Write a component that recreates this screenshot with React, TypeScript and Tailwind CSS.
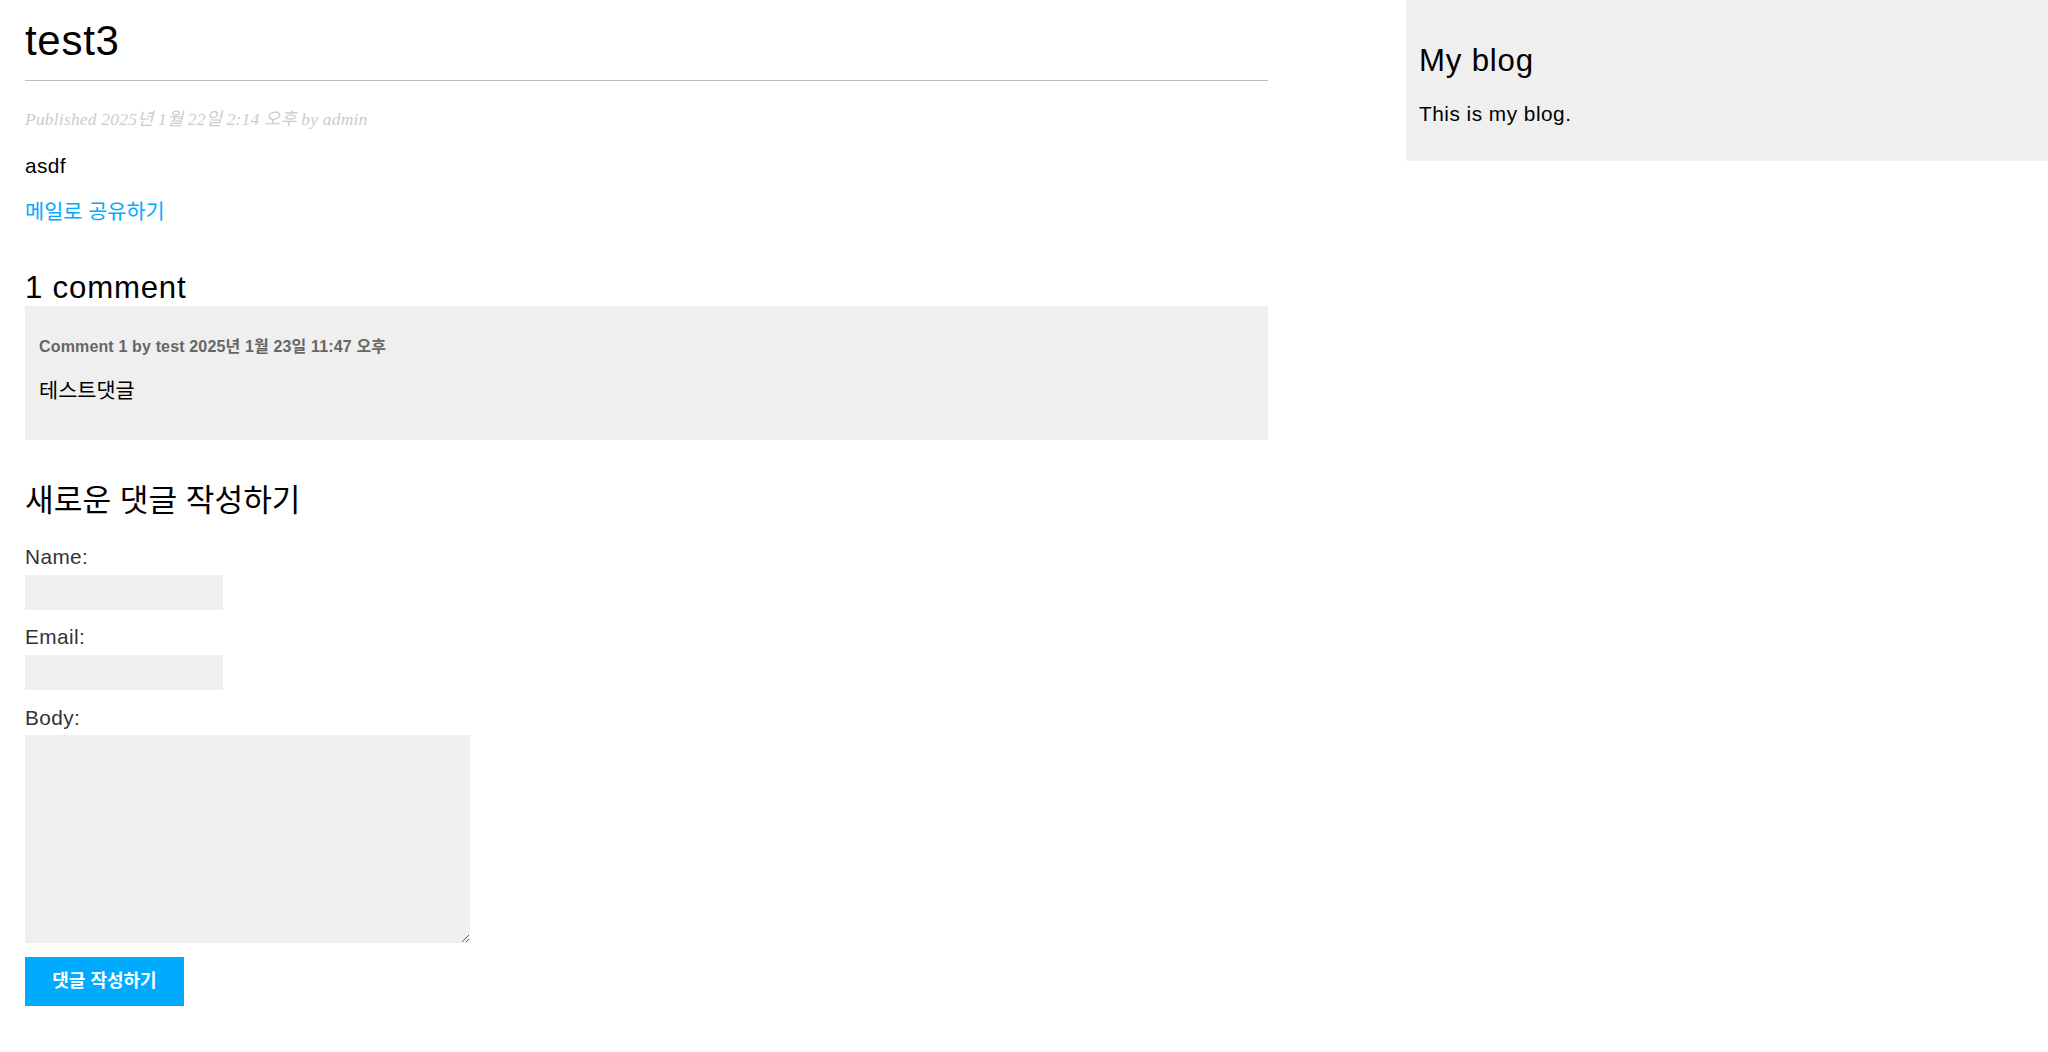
import React from "react";

const SANS = "font-['Liberation_Sans','Noto_Sans_CJK_KR',sans-serif]";

export default function App() {
  return (
    <div className={`${SANS} flex w-[2048px] min-h-[1052px] items-start justify-between bg-white text-black`}>
      {/* Content */}
      <div className="ml-[25px] flex w-[1243px] flex-col">
        <h1 className="mt-[20px] border-b border-[#bdbdbd] pb-[18px] text-[42px] leading-[42px] font-normal tracking-[0.7px]">
          test3
        </h1>
        <p className="mt-[28px] font-['Liberation_Serif','Noto_Sans_CJK_KR',serif] text-[17.5px] leading-[21px] italic tracking-[0.2px] text-[#cccccc]">
          Published 2025년 1월 22일 2:14 오후 by admin
        </p>
        <p className="mt-[24px] text-[20.8px] leading-[24px] tracking-[0.4px]">asdf</p>
        <p className="mt-[22px] text-[20.8px] leading-[24px]">
          <a href="#" className="text-[#00abff] no-underline">
            메일로 공유하기
          </a>
        </p>

        <h2 className="mt-[46px] text-[31.2px] leading-[36px] font-normal tracking-[0.8px]">1 comment</h2>
        <div className="flex h-[134px] flex-col bg-[#efefef] px-[14px]">
          <p className="mt-[31px] text-[16px] leading-[19px] font-bold text-[#666666] tracking-[0.15px]">
            Comment 1 by test 2025년 1월 23일 11:47 오후
          </p>
          <p className="mt-[23px] text-[20.8px] leading-[24px]">테스트댓글</p>
        </div>

        <h2 className="mt-[43px] text-[31.2px] leading-[36px] font-normal">새로운 댓글 작성하기</h2>
        <form className="flex flex-col" onSubmit={(e) => e.preventDefault()}>
          <label className="mt-[26px] text-[20.8px] leading-[24px] text-[#333333] tracking-[0.4px]">Name:</label>
          <input
            type="text"
            className="mt-[6px] h-[35px] w-[198px] border-0 bg-[#efefef] outline-none"
          />
          <label className="mt-[15px] text-[20.8px] leading-[24px] text-[#333333] tracking-[0.4px]">Email:</label>
          <input
            type="email"
            className="mt-[6px] h-[35px] w-[198px] border-0 bg-[#efefef] outline-none"
          />
          <label className="mt-[16px] text-[20.8px] leading-[24px] text-[#333333] tracking-[0.4px]">Body:</label>
          <textarea className="mt-[5px] h-[208px] w-[445px] border-0 bg-[#efefef] outline-none" />
          <div className="mt-[14px]">
            <button
              type="submit"
              className="h-[49px] w-[159px] bg-[#00abff] text-[18px] font-bold text-white"
            >
              댓글 작성하기
            </button>
          </div>
        </form>
      </div>

      {/* Sidebar */}
      <div className="flex h-[161px] w-[642px] flex-col bg-[#efefef] px-[13px]">
        <h2 className="mt-[43px] text-[31.2px] leading-[36px] font-normal tracking-[0.8px]">My blog</h2>
        <p className="mt-[23px] text-[20.8px] leading-[24px] tracking-[0.5px]">This is my blog.</p>
      </div>
    </div>
  );
}
